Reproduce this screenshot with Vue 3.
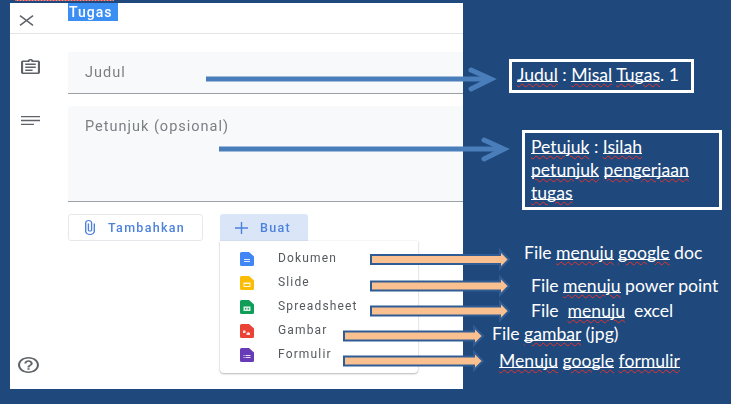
<template>
  <div class="page">
    <span class="spell-top"></span>

    <section class="panel">
      <header class="panel-head">
        <button class="close-btn">
          <svg width="15" height="11" viewBox="0 0 15 11" preserveAspectRatio="none">
            <path d="M1 .7 14 10.3M14 .7 1 10.3" stroke="#5f6368" stroke-width="1.5" fill="none" />
          </svg>
        </button>
        <span class="title">Tugas</span>
      </header>

      <div class="panel-body">
        <div class="row">
          <svg class="rail-icon assign" viewBox="3 1 18 20" preserveAspectRatio="none">
            <path fill="#5f6368" d="M19 3h-4.18C14.4 1.84 13.3 1 12 1c-1.3 0-2.4.84-2.82 2H5c-1.1 0-2 .9-2 2v14c0 1.1.9 2 2 2h14c1.1 0 2-.9 2-2V5c0-1.1-.9-2-2-2zm-7 0c.55 0 1 .45 1 1s-.45 1-1 1-1-.45-1-1 .45-1 1-1zm7 16H5V5h14v14zM7 15h7v2H7zm0-4h10v2H7zm0-4h10v2H7z" />
          </svg>
          <div class="field field-title">Judul</div>
        </div>

        <div class="row">
          <svg class="rail-icon lines" viewBox="0 0 19 9" preserveAspectRatio="none">
            <path d="M0 .7h19M0 4.5h19M0 8.3h13" stroke="#5f6368" stroke-width="1.3" fill="none" />
          </svg>
          <div class="field field-notes">Petunjuk (opsional)</div>
        </div>

        <div class="actions">
          <button class="btn btn-add">
            <svg class="clip" viewBox="7 1 11 22" preserveAspectRatio="none">
              <path fill="#4d82dc" d="M16.5 6v11.5c0 2.21-1.79 4-4 4s-4-1.79-4-4V5c0-1.38 1.12-2.5 2.5-2.5s2.5 1.12 2.5 2.5v10.5c0 .55-.45 1-1 1s-1-.45-1-1V6H10v9.5c0 1.38 1.12 2.5 2.5 2.5s2.5-1.12 2.5-2.5V5c0-2.21-1.79-4-4-4S7 2.79 7 5v12.5c0 3.04 2.46 5.5 5.5 5.5s5.5-2.46 5.5-5.5V6h-1.5z" />
            </svg>
            Tambahkan
          </button>
          <div class="create">
            <button class="btn btn-create">
              <svg class="plus" viewBox="0 0 13 12">
                <path d="M0 6h13M6.5 0v12" stroke="#4d82dc" stroke-width="1.4" fill="none" />
              </svg>
              Buat
            </button>
            <ul class="menu">
              <li v-for="item in menuItems" :key="item.label" class="menu-item">
                <svg class="file-icon" viewBox="0 0 14 14">
                  <path :fill="item.color" d="M1.5 0H9l5 4.5v8a1.5 1.5 0 0 1-1.5 1.5h-11A1.500 1.500 0 0 1 0 12.500v-11A1.500 1.500 0 0 1 1.500 0z" />
                  <path fill="#fff" fill-opacity=".85" :d="item.glyph" />
                </svg>
                <span class="menu-label">{{ item.label }}</span>
              </li>
            </ul>
          </div>
        </div>

        <svg class="help" viewBox="2 2 20 20" preserveAspectRatio="none">
          <path fill="#5f6368" d="M11 18h2v-2h-2v2zm1-16C6.48 2 2 6.48 2 12s4.48 10 10 10 10-4.48 10-10S17.52 2 12 2zm0 18c-4.41 0-8-3.59-8-8s3.59-8 8-8 8 3.590 8 8-3.590 8-8 8zm0-14c-2.210 0-4 1.790-4 4h2c0-1.100.9-2 2-2s2 .9 2 2c0 2-3 1.750-3 5h2c0-2.250 3-2.500 3-5 0-2.210-1.790-4-4-4z" />
        </svg>
      </div>
    </section>

    <!-- panah di atas screenshot -->
    <svg class="arrows" width="731" height="404" viewBox="0 0 731 404">
      <g v-for="a in blueArrows" :key="a.y" fill="none" stroke="#4a7ebb" stroke-width="5">
        <path :d="`M${a.x} ${a.y}H${a.tip - 3}`" />
        <path stroke-linecap="round" :d="`M${a.tip - 20} ${a.y - 9}L${a.tip} ${a.y}L${a.tip - 20} ${a.y + 10}`" />
      </g>
      <polygon v-for="a in orangeArrows" :key="a.y" :points="arrowPoints(a)" fill="#fac090" stroke="#2f5c94" stroke-width="2" />
    </svg>

    <div class="note note-title"><span class="typo">Judul</span> : <span class="typo">Misal</span> <span class="typo">Tugas</span>. 1</div>
    <div class="note note-hint"><span class="typo">Petujuk</span> : <span class="typo">Isilah</span><br><span class="typo">petunjuk</span> <span class="typo">pengerjaan</span><br><span class="typo">tugas</span></div>

    <p class="cap cap-doc">File <span class="typo">menuju</span> <span class="typo">google</span> doc</p>
    <p class="cap cap-slide">File <span class="typo">menuju</span> power point</p>
    <p class="cap cap-sheet">File&nbsp; <span class="typo">menuju</span>&nbsp; excel</p>
    <p class="cap cap-img">File <span class="typo">gambar</span> (jpg)</p>
    <p class="cap cap-form"><span class="typo">Menuju</span> <span class="typo">google</span> <span class="typo">formulir</span></p>
  </div>
</template>

<script setup>
const menuItems = [
  { label: 'Dokumen', color: '#4285f4', glyph: 'M4 7h6v1H4zM4 9h6v1H4z' },
  { label: 'Slide', color: '#fbbc04', glyph: 'M3.500 6.500h7v4.500h-7zM4.500 8v2h5V8z' },
  { label: 'Spreadsheet', color: '#0f9d58', glyph: 'M3.500 6.500h7v4.500h-7zM5 8v1.500h1.300V8zM7.700 8v1.500H9V8z' },
  { label: 'Gambar', color: '#ea4335', glyph: 'M3 6.500h2.500V9H3zM6.500 9.500l1.500-1.500 2 1v2H6.500z' },
  { label: 'Formulir', color: '#673ab7', glyph: 'M3.500 7h1v1h-1zM3.500 9h1v1h-1zM5.500 7h5v1h-5zM5.500 9h5v1h-5z' }
]

const blueArrows = [
  { x: 206, tip: 491, y: 79 },
  { x: 219, tip: 504, y: 149 }
]

const orangeArrows = [
  { x: 371, tip: 509, y: 259.5 },
  { x: 371, tip: 509, y: 286 },
  { x: 371, tip: 509, y: 311 },
  { x: 344, tip: 483, y: 336 },
  { x: 344, tip: 483, y: 361 }
]

function arrowPoints({ x, tip, y }) {
  const neck = tip - 9
  return [
    [x, y - 4.5], [neck, y - 4.5], [neck, y - 9], [tip, y], [neck, y + 9], [neck, y + 4.5], [x, y + 4.5]
  ].map((p) => p.join(',')).join(' ')
}
</script>

<style scoped>
.page {
  position: relative;
  width: 731px;
  height: 404px;
  padding: 3px 268px 15px 10px;
  box-sizing: border-box;
  background: #1f497d;
  overflow: hidden;
}

.spell-top {
  position: absolute;
  left: 15px;
  top: 0;
  width: 99px;
  height: 1px;
  background: repeating-linear-gradient(90deg, #e8524f 0 2px, #9fb0c8 2px 3px);
}

.panel {
  display: flex;
  flex-direction: column;
  height: 100%;
  background: #fff;
  font-family: Roboto, sans-serif;
  filter: blur(0.45px);
}

.panel-head {
  display: flex;
  align-items: flex-start;
  height: 30px;
  border-bottom: 1px solid #e3e4e6;
  flex-shrink: 0;
}

.close-btn {
  width: 58px;
  height: 30px;
  padding: 4px 0 0 9px;
  border: 0;
  background: none;
  text-align: left;
  line-height: 0;
}

.title {
  width: 50px;
  height: 18px;
  padding-left: 1px;
  box-sizing: border-box;
  background: #3b8ff3;
  color: #fff;
  font-size: 14px;
  font-weight: 500;
  letter-spacing: 1px;
  line-height: 18px;
}

.panel-body {
  position: relative;
  flex: 1;
  padding-top: 18px;
}

.row {
  display: flex;
  margin-bottom: 12px;
}

.rail-icon {
  flex-shrink: 0;
  margin-left: 11px;
}

.assign {
  width: 19px;
  height: 15px;
  margin-top: 7px;
  margin-right: 28px;
}

.lines {
  width: 19px;
  height: 9px;
  margin-top: 10px;
  margin-right: 28px;
}

.field {
  flex: 1;
  padding-left: 17px;
  background: #f8f9fa;
  border-bottom: 1px solid #9aa0a6;
  border-radius: 3px 0 0 0;
  color: #7a7f84;
  font-size: 14.5px;
  letter-spacing: 1px;
  box-sizing: border-box;
}

.field-title {
  height: 42px;
  padding-top: 12px;
}

.field-notes {
  height: 96px;
  padding-top: 12px;
}

.actions {
  display: flex;
  gap: 17px;
  margin-left: 58px;
}

.btn {
  display: flex;
  align-items: center;
  height: 27px;
  box-sizing: border-box;
  border-radius: 3px;
  color: #4d82dc;
  font-family: Roboto, sans-serif;
  font-size: 12.5px;
  font-weight: 500;
  letter-spacing: 1.3px;
}

.btn-add {
  width: 135px;
  padding: 0 0 0 16px;
  border: 1px solid #e6e8eb;
  background: #fff;
}

.clip {
  width: 10px;
  height: 15px;
  margin-right: 13px;
}

.create {
  position: relative;
}

.btn-create {
  width: 88px;
  padding: 0 0 0 15px;
  border: 0;
  background: #dae6f8;
  border-radius: 3px 3px 0 0;
}

.plus {
  width: 13px;
  height: 12px;
  margin-right: 12px;
}

.menu {
  position: absolute;
  left: 0;
  top: 27px;
  width: 198px;
  height: 132px;
  margin: 0;
  padding: 6px 0 0;
  box-sizing: border-box;
  list-style: none;
  background: #fff;
  border-radius: 0 0 4px 4px;
  box-shadow: 0 1px 2px rgba(60, 64, 67, 0.35), 0 0 2px rgba(60, 64, 67, 0.12);
}

.menu-item {
  display: flex;
  align-items: center;
  height: 24px;
  padding-left: 20px;
  color: #55595e;
  font-size: 12px;
  letter-spacing: 1.15px;
}

.menu-label {
  margin-bottom: 2px;
}

.file-icon {
  width: 14px;
  height: 14px;
  margin-right: 24px;
}

.help {
  position: absolute;
  left: 8px;
  bottom: 16px;
  width: 21px;
  height: 16px;
}

.arrows {
  position: absolute;
  left: 0;
  top: 0;
  pointer-events: none;
}

.note,
.cap {
  position: absolute;
  margin: 0;
  color: #fff;
  font-family: Lato, sans-serif;
  font-size: 17.6px;
  box-sizing: border-box;
}

.note {
  border: 3px solid #fff;
  background: #1f497d;
}

.note-title {
  left: 509px;
  top: 59px;
  width: 185px;
  height: 34px;
  padding: 2px 0 0 5px;
}

.note-hint {
  left: 522px;
  top: 130px;
  width: 200px;
  height: 80px;
  padding: 2px 4px 0 6px;
  line-height: 23px;
}

.cap {
  white-space: nowrap;
  line-height: 20px;
}

.cap-doc { left: 524px; top: 243px; }
.cap-slide { left: 531px; top: 276px; }
.cap-sheet { left: 531px; top: 301px; }
.cap-img { left: 492px; top: 324px; }
.cap-form { left: 499px; top: 351px; }

.typo {
  background: linear-gradient(#fff, #fff) 0 calc(100% - 3px) / 100% 1px no-repeat;
  text-decoration: underline wavy #e8312f 1px;
  text-underline-offset: 2px;
}
</style>
